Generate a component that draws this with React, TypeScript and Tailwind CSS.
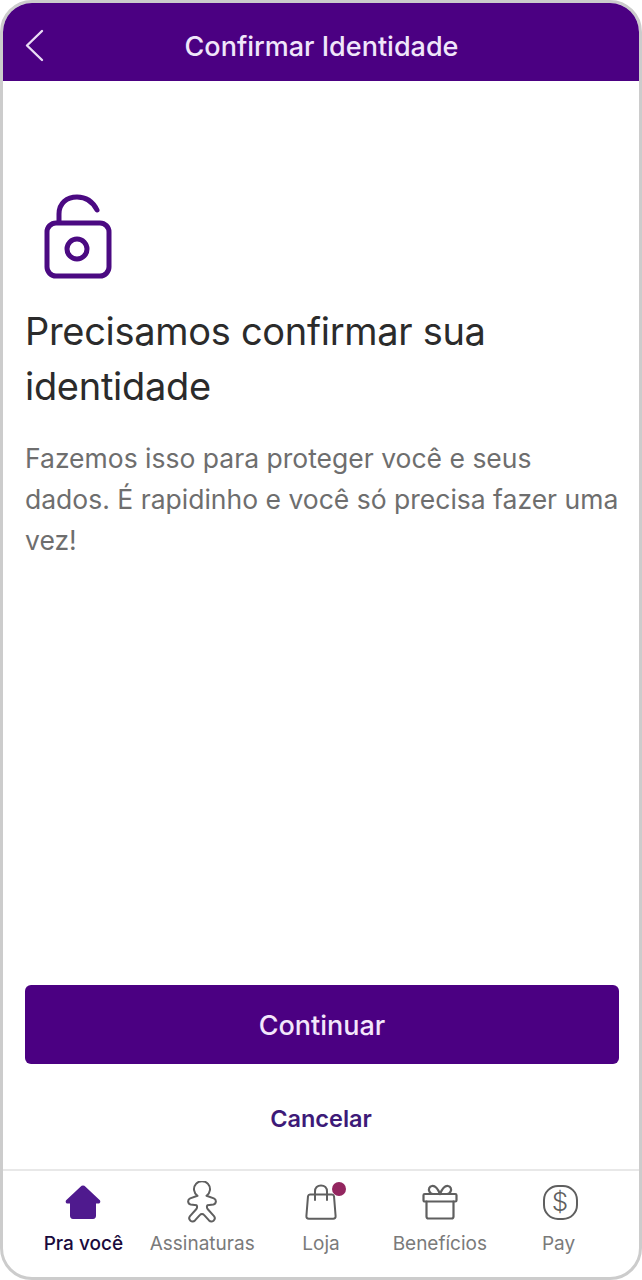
import React from 'react';

const purple = '#4b0082';

const LockIcon = () => (
  <svg width="68" height="88" viewBox="0 0 68 88" fill="none" stroke="#4b0a82" strokeWidth="5" strokeLinecap="round" strokeLinejoin="round">
    <rect x="3" y="29" width="62" height="53" rx="9" />
    <circle cx="33" cy="55" r="10" />
    <path d="M15 28 V20 C15 9 23 3 33 3 C43 3 49 8 53 16" />
  </svg>
);

const HomeIcon = () => (
  <svg width="36" height="36" viewBox="0 0 36 36" fill="#4f1a8e">
    <path d="M18 1.5 C19 1.5 19.8 2 20.5 2.7 L34.6 16 C36 17.5 35.2 19.5 33.4 19.5 H31 V31.5 C31 33.5 30 35 28 35 H8 C6 35 5 33.5 5 31.5 V19.5 H2.6 C0.8 19.5 0 17.5 1.4 16 L15.5 2.7 C16.2 2 17 1.5 18 1.5 Z" />
  </svg>
);

const GingerIcon = () => (
  <svg width="30" height="42" viewBox="0 0 30 42" fill="none" stroke="#5f5f5f" strokeWidth="2" strokeLinejoin="round" strokeLinecap="round">
    <path d="M10.5 14.8 A8 8 0 1 1 19.5 14.8 L26.8 17.4 C29.8 18.8 29.4 22.8 26.4 23.4 L20.4 24.2 C19.6 25.6 19.8 26.8 20.6 28 L27 35.2 C29.5 38.5 25 42.5 21.8 39.2 L17 33.8 C16 32.6 14 32.6 13 33.8 L8.2 39.2 C5 42.5 0.5 38.5 3 35.2 L9.4 28 C10.2 26.8 10.4 25.6 9.6 24.2 L3.6 23.4 C0.6 22.8 0.2 18.8 3.2 17.4 Z" />
  </svg>
);

const BagIcon = () => (
  <svg width="32" height="36" viewBox="0 0 32 36" fill="none" stroke="#5f5f5f" strokeWidth="2" strokeLinejoin="round" strokeLinecap="round">
    <path d="M5 10.5 H27 C28 10.5 28.8 11.2 29 12.2 L30.6 32 C30.8 33.6 29.8 34.8 28.2 34.8 H3.8 C2.2 34.8 1.2 33.6 1.4 32 L3 12.2 C3.2 11.2 4 10.5 5 10.5 Z" />
    <path d="M10 16 V7.5 C10 3.8 12.4 1.4 16 1.4 C19.6 1.4 22 3.8 22 7.5 V16" />
  </svg>
);

const GiftIcon = () => (
  <svg width="36" height="36" viewBox="0 0 36 36" fill="none" stroke="#5f5f5f" strokeWidth="2.2" strokeLinejoin="round" strokeLinecap="round">
    <rect x="1.5" y="10" width="33" height="7.5" rx="1.2" />
    <path d="M4.5 17.5 V32.5 C4.5 33.8 5.3 34.5 6.5 34.5 H29.5 C30.7 34.5 31.5 33.8 31.5 32.5 V17.5" />
    <path d="M18 10 C15.5 4 12.5 1.6 10 2 C7.4 2.4 6.2 5 7.4 7.4 C8.2 9 9.5 10 11 10" />
    <path d="M18 10 C20.5 4 23.5 1.6 26 2 C28.6 2.4 29.8 5 28.6 7.4 C27.8 9 26.5 10 25 10" />
  </svg>
);

const PayIcon = () => (
  <div className="w-[35px] h-[35px] ml-[3px] rounded-[15px] border-2 border-[#5f5f5f] flex items-center justify-center text-[#5f5f5f] text-[26px] leading-none font-light">
    $
  </div>
);

const tabs = [
  { label: 'Pra você', icon: <HomeIcon />, active: true },
  { label: 'Assinaturas', icon: <GingerIcon /> },
  { label: 'Loja', icon: <BagIcon />, badge: true },
  { label: 'Benefícios', icon: <GiftIcon /> },
  { label: 'Pay', icon: <PayIcon /> },
];

export default function App() {
  return (
    <div className="w-[642px] h-[1280px] bg-white font-['Inter',sans-serif]">
      <div className="h-full rounded-[32px] border-[3px] border-[#cccccc] overflow-hidden flex flex-col bg-white">
        {/* Header */}
        <div className="h-[78px] shrink-0 flex items-center justify-center relative" style={{ backgroundColor: purple }}>
          <svg className="absolute left-[22px] top-[26px]" width="19" height="33" viewBox="0 0 19 33" fill="none" stroke="#e9dcf5" strokeWidth="2.4" strokeLinecap="round" strokeLinejoin="round">
            <path d="M17 2 L2 16.5 L17 31" />
          </svg>
          <span className="text-[27px] font-medium text-[#f0e6fa] mt-[10px] ml-[1px]">Confirmar Identidade</span>
        </div>

        {/* Content */}
        <div className="flex-1 flex flex-col px-[22px]">
          <div className="pt-[113px] pl-[19px]">
            <LockIcon />
          </div>
          <h1 className="mt-[22px] text-[38px] leading-[55px] font-normal tracking-[-0.3px] text-[#2b2b2b]">
            Precisamos confirmar sua identidade
          </h1>
          <p className="mt-[24px] mr-[-6px] text-[26.5px] leading-[41px] text-[#6e6e6e]">
            Fazemos isso para proteger você e seus dados. É rapidinho e você só precisa fazer uma vez!
          </p>

          <div className="mt-auto flex flex-col items-stretch pb-[34px]">
            <button className="h-[79px] pt-[3px] mr-[-2px] rounded-[6px] text-[27px] font-medium text-[#f3e6fb]" style={{ backgroundColor: purple }}>
              Continuar
            </button>
            <button className="mt-[37px] h-[34px] text-[23.5px] font-semibold text-[#3d1a78]">Cancelar</button>
          </div>
        </div>

        {/* Tab bar */}
        <div className="h-[108px] shrink-0 border-t-2 border-[#e8e8e8] flex px-[21px]">
          {tabs.map((tab) => (
            <div key={tab.label} className="flex-1 flex flex-col items-center">
              <div className="h-[44px] mt-[9px] flex items-center justify-center relative">
                {tab.icon}
                {tab.badge && (
                  <span className="absolute right-[-9px] top-[2px] w-[14px] h-[14px] rounded-full bg-[#93265f]" />
                )}
              </div>
              <span className={`mt-[6px] text-[19px] leading-[28px] whitespace-nowrap ${tab.active ? 'text-[#1a0a3c] font-medium' : 'text-[#7a7a7a]'}`}>
                {tab.label}
              </span>
            </div>
          ))}
        </div>
      </div>
    </div>
  );
}
